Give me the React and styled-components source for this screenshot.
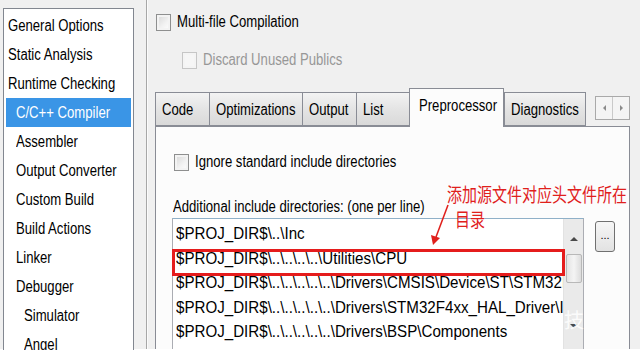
import React from "react";
import styled, { createGlobalStyle } from "styled-components";

const Global = createGlobalStyle`
  html, body { margin: 0; padding: 0; background: #f0f0f0; }
  body { font-family: "Liberation Sans", Arial, sans-serif; }
`;

const Screen = styled.div`
  position: relative;
  width: 640px;
  height: 360px;
  overflow: hidden;
  background: linear-gradient(#f0f0f0 349px, #ffffff 349px);
  display: flex;
  align-items: flex-start;
  font-size: 16px;
  color: #000;
`;

// the dialog font is a narrow sans; Liberation Sans squeezed to match
const Txt = styled.span`
  display: inline-block;
  white-space: nowrap;
  transform: scaleX(${(p) => p.$sx || 0.82});
  transform-origin: 0 50%;
`;

const CategoryList = styled.ul`
  list-style: none;
  margin: 8px 0 0 3px;
  padding: 2px 0 0;
  width: 129px;
  height: 339px;
  border: 1px solid #828790;
  border-bottom: none;
  background: #fff;
  overflow: hidden;
  flex-shrink: 0;
`;

const Category = styled.li`
  height: 29px;
  line-height: 29px;
  margin: 0 2px;
  padding-left: ${(p) => p.$indent}px;
  white-space: nowrap;
  background: ${(p) => (p.$active ? "#3a95e6" : "transparent")};
  color: ${(p) => (p.$active ? "#fff" : "#000")};
`;

const Splitter = styled.div`
  width: 1px;
  height: 349px;
  margin-left: 12px;
  background: #a7a7a7;
  border-right: 1px solid #fbfbfb;
  flex-shrink: 0;
`;

const Pane = styled.div`
  flex: 1;
  display: flex;
  flex-direction: column;
  padding: 13px 0 0 8px;
`;

const CheckRow = styled.label`
  display: flex;
  align-items: center;
  gap: 6px;
  height: 18px;
  margin-left: ${(p) => p.$indent || 0}px;
  margin-top: ${(p) => p.$top || 0}px;
  color: ${(p) => (p.$disabled ? "#979797" : "#000")};
  white-space: nowrap;
`;

const Box = styled.span`
  width: 13px;
  height: 15px;
  border: 1px solid ${(p) => (p.$disabled ? "#c6c6c6" : "#8e8f8f")};
  background: ${(p) =>
    p.$disabled
      ? "#f6f6f6"
      : "linear-gradient(135deg, #d6d6d6 0%, #f2f2f2 60%, #ffffff 100%)"};
  box-shadow: inset 0 0 0 2px ${(p) => (p.$disabled ? "#f4f4f4" : "#f3f3f3")};
  flex-shrink: 0;
`;

const TabBar = styled.div`
  display: flex;
  align-items: flex-end;
  height: 39px;
  margin-top: 18px;
  margin-left: -1px;
`;

const Tab = styled.div`
  width: ${(p) => p.$w}px;
  box-sizing: border-box;
  height: ${(p) => (p.$active ? 39 : 34)}px;
  padding: ${(p) => (p.$active ? "8px 0 0 9px" : "8px 0 0 6px")};
  border: 1px solid #898c95;
  border-bottom: ${(p) => (p.$active ? "none" : "1px solid #898c95")};
  border-right: ${(p) => (p.$last ? "1px solid #898c95" : "none")};
  background: ${(p) =>
    p.$active ? "#fcfcfc" : "linear-gradient(#f3f3f3, #e4e4e4 50%, #d9d9d9)"};
  white-space: nowrap;
  position: relative;
  z-index: ${(p) => (p.$active ? 2 : 1)};
  margin-bottom: ${(p) => (p.$active ? -1 : 0)}px;
`;

const Scroller = styled.div`
  display: flex;
  margin: 0 0 6px 9px;
  border: 1px solid #a9a9a9;
  background: #f4f4f4;
`;

const ScrollBtn = styled.div`
  width: 16px;
  height: 22px;
  display: flex;
  align-items: center;
  justify-content: center;
  border-left: ${(p) => (p.$right ? "1px solid #c9c9c9" : "none")};
`;

const Panel = styled.div`
  position: relative;
  width: 475px;
  height: 223px;
  margin-left: -1px;
  border: 1px solid #898c95;
  border-bottom: none;
  background: #fcfcfc;
  padding: 26px 0 0 18px;
  box-sizing: border-box;
  overflow: hidden;
`;

const Caption = styled.div`
  margin-top: 26px;
  margin-left: -1px;
  height: 19px;
  line-height: 19px;
  white-space: nowrap;
`;

const ListRow = styled.div`
  display: flex;
  align-items: flex-start;
  gap: 11px;
  margin-top: 2px;
  margin-left: -2px;
`;

const DirList = styled.div`
  position: relative;
  display: flex;
  width: 412px;
  height: 132px;
  box-sizing: border-box;
  border: 1px solid #abadb3;
  border-top-color: #8fb0c8;
  background: #fff;
`;

const Lines = styled.div`
  flex: 1;
  padding: 3px 0 0 3px;
  overflow: hidden;
`;

const Line = styled.div`
  height: 24.5px;
  line-height: 24.5px;
  white-space: nowrap;
  color: #000;
  font-size: 17px;
`;

const VScroll = styled.div`
  width: 19px;
  flex-shrink: 0;
  background: #eaeaea;
  border-left: 1px solid #e2e2e2;
  display: flex;
  flex-direction: column;
  align-items: center;
  padding-top: 18px;
`;

const Thumb = styled.div`
  width: 14px;
  height: 27px;
  margin-top: 13px;
  border: 1px solid #b8b8b8;
  border-radius: 2px;
  background: linear-gradient(90deg, #e4e4e4, #f4f4f4 50%, #dcdcdc);
`;

const DownArrow = styled.div`
  margin-top: auto;
  margin-bottom: 17px;
`;

const Highlight = styled.div`
  position: absolute;
  left: -1px;
  top: 30px;
  width: 393px;
  height: 27px;
  box-sizing: border-box;
  border: 3px solid #e51c1c;
`;

const BrowseBtn = styled.div`
  width: 20px;
  height: 31px;
  margin-top: 3px;
  box-sizing: border-box;
  border: 1px solid #707070;
  border-radius: 3px;
  background: linear-gradient(#f6f6f6, #e2e2e2);
  display: flex;
  align-items: center;
  justify-content: center;
  font-size: 11px;
  line-height: 1;
  padding-bottom: 2px;
`;

const Note = styled.div`
  position: absolute;
  left: 447px;
  top: 181px;
  color: #e0201c;
  font-family: "Noto Sans CJK SC", sans-serif;
  font-size: 19px;
  line-height: 25px;
  transform: scaleX(0.79);
  transform-origin: left top;
  white-space: nowrap;
`;

const NoteLine2 = styled.div`
  padding-left: 10px;
`;

const Arrow = styled.svg`
  position: absolute;
  left: 428px;
  top: 203px;
`;

const Watermark = styled.div`
  position: absolute;
  left: 564px;
  top: 305px;
  font-family: "Noto Sans CJK SC", sans-serif;
  font-size: 20px;
  color: rgba(255, 255, 255, 0.85);
`;

const Tri = ({ dir, size = 4, color = "#6d6d6d" }) => {
  const s = size;
  const pts = {
    up: `0,${s} ${s},0 ${2 * s},${s}`,
    down: `0,0 ${s},${s} ${2 * s},0`,
    left: `${s},0 0,${s} ${s},${2 * s}`,
    right: `0,0 ${s},${s} 0,${2 * s}`,
  }[dir];
  const w = dir === "up" || dir === "down" ? 2 * s : s;
  const h = dir === "up" || dir === "down" ? s : 2 * s;
  return (
    <svg width={w} height={h} viewBox={`0 0 ${w} ${h}`}>
      <polygon points={pts} fill={color} />
    </svg>
  );
};

const categories = [
  ["General Options", 2],
  ["Static Analysis", 2],
  ["Runtime Checking", 2],
  ["C/C++ Compiler", 10, true],
  ["Assembler", 10],
  ["Output Converter", 10],
  ["Custom Build", 10],
  ["Build Actions", 10],
  ["Linker", 10],
  ["Debugger", 10],
  ["Simulator", 18],
  ["Angel", 18],
];

const tabs = [
  ["Code", 54],
  ["Optimizations", 93],
  ["Output", 54],
  ["List", 53],
  ["Preprocessor", 95, true],
  ["Diagnostics", 82],
];

const dirs = [
  "$PROJ_DIR$\\..\\Inc",
  "$PROJ_DIR$\\..\\..\\..\\..\\Utilities\\CPU",
  "$PROJ_DIR$\\..\\..\\..\\..\\..\\Drivers\\CMSIS\\Device\\ST\\STM32F4xx\\Include",
  "$PROJ_DIR$\\..\\..\\..\\..\\..\\Drivers\\STM32F4xx_HAL_Driver\\Inc",
  "$PROJ_DIR$\\..\\..\\..\\..\\..\\Drivers\\BSP\\Components",
];

export default function App() {
  return (
    <>
      <Global />
      <Screen>
        <CategoryList>
          {categories.map(([name, indent, active]) => (
            <Category key={name} $indent={indent} $active={active}>
              <Txt>{name}</Txt>
            </Category>
          ))}
        </CategoryList>
        <Splitter />
        <Pane>
          <CheckRow>
            <Box />
            <Txt>Multi-file Compilation</Txt>
          </CheckRow>
          <CheckRow $indent={26} $top={20} $disabled>
            <Box $disabled />
            <Txt>Discard Unused Publics</Txt>
          </CheckRow>
          <TabBar>
            {tabs.map(([name, w, active], i) => (
              <Tab
                key={name}
                $w={w}
                $active={active}
                $last={i === tabs.length - 1 || active}
              >
                <Txt>{name}</Txt>
              </Tab>
            ))}
            <Scroller>
              <ScrollBtn>
                <Tri dir="left" size={3} color="#8a8a8a" />
              </ScrollBtn>
              <ScrollBtn $right>
                <Tri dir="right" size={3} color="#8a8a8a" />
              </ScrollBtn>
            </Scroller>
          </TabBar>
          <Panel>
            <CheckRow>
              <Box />
              <Txt>Ignore standard include directories</Txt>
            </CheckRow>
            <Caption>
              <Txt>Additional include directories: (one per line)</Txt>
            </Caption>
            <ListRow>
              <DirList>
                <Lines>
                  {dirs.map((d) => (
                    <Line key={d}>
                      <Txt $sx={0.89}>{d}</Txt>
                    </Line>
                  ))}
                </Lines>
                <VScroll>
                  <Tri dir="up" size={4} color="#4a4a4a" />
                  <Thumb />
                  <DownArrow>
                    <Tri dir="down" size={4} color="#4a4a4a" />
                  </DownArrow>
                </VScroll>
                <Highlight />
              </DirList>
              <BrowseBtn>...</BrowseBtn>
            </ListRow>
          </Panel>
        </Pane>
        <Note>
          添加源文件对应头文件所在
          <NoteLine2>目录</NoteLine2>
        </Note>
        <Arrow width="24" height="44" viewBox="0 0 24 44">
          <line x1="20" y1="2" x2="8" y2="34" stroke="#e0201c" strokeWidth="1.6" />
          <polygon points="3,32 12,35 5,42" fill="#e0201c" />
        </Arrow>
        <Watermark>技</Watermark>
      </Screen>
    </>
  );
}
